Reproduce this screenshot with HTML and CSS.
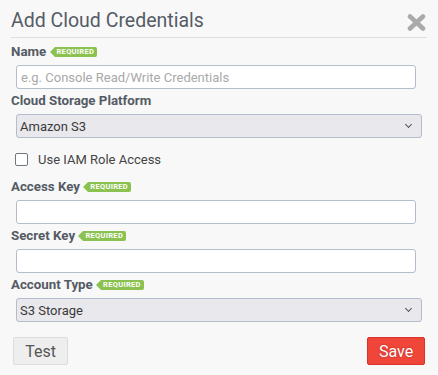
FILE: index.html
```html
<!DOCTYPE html>
<html lang="en">
<head>
  <meta charset="UTF-8">
  <meta name="viewport" content="width=device-width, initial-scale=1.0">
  <title>Add Cloud Credentials</title>
  <link rel="stylesheet" href="styles.css">
</head>
<body>
  <div class="modal">
    <div class="modal-header">
      <div class="modal-title">Add Cloud Credentials</div>
      <svg class="close" width="19" height="17" viewBox="0 0 19 17">
        <path d="M3 2.5 L16 14.5 M16 2.5 L3 14.5" stroke="#aaaaaa" stroke-width="4.6" stroke-linecap="round"/>
      </svg>
    </div>

    <div class="field-label">Name <span class="req">REQUIRED</span></div>
    <input class="text-input" type="text" placeholder="e.g. Console Read/Write Credentials">

    <div class="field-label">Cloud Storage Platform</div>
    <div class="select-wrap">
      <select class="select-input">
        <option>Amazon S3</option>
      </select>
    </div>

    <label class="check-row">
      <span class="checkbox"></span>
      Use IAM Role Access
    </label>

    <div class="field-label spaced">Access Key <span class="req">REQUIRED</span></div>
    <input class="text-input" type="text">

    <div class="field-label">Secret Key <span class="req">REQUIRED</span></div>
    <input class="text-input" type="text">

    <div class="field-label">Account Type <span class="req">REQUIRED</span></div>
    <div class="select-wrap">
      <select class="select-input">
        <option>S3 Storage</option>
      </select>
    </div>

    <div class="modal-footer">
      <button class="btn btn-test">Test</button>
      <button class="btn btn-save">Save</button>
    </div>
  </div>
</body>
</html>
```

FILE: styles.css
```css
body {
  margin: 0;
  font-family: 'Roboto', 'Liberation Sans', sans-serif;
  background: #f8f8f8;
  color: #555c66;
}
.modal {
  padding: 0 11px;
}
.modal-header {
  display: flex;
  justify-content: space-between;
  align-items: flex-start;
  padding: 9px 0 4px;
  border-bottom: 1px solid #dddddd;
}
.modal-title {
  font-size: 19.5px;
  line-height: 24px;
  color: #555c66;
}
.close {
  margin-top: 5px;
  margin-right: 1px;
}
.field-label {
  font-size: 13.3px;
  line-height: 16px;
  font-weight: bold;
  color: #545b65;
  margin: 4px 0 5px;
}
.modal-header + .field-label {
  margin-top: 6px;
}
.field-label.spaced {
  margin-top: 12px;
}
.req {
  position: relative;
  display: inline-block;
  vertical-align: 2px;
  height: 10px;
  line-height: 10px;
  padding: 0 3px 0 2px;
  margin-left: 5px;
  background: #8bc14e;
  color: #fff;
  font-size: 7.5px;
  font-weight: bold;
  letter-spacing: 0.3px;
  border-radius: 0 2px 2px 0;
}
.req::before {
  content: "";
  position: absolute;
  left: -5px;
  top: 0;
  border-style: solid;
  border-width: 5px 5px 5px 0;
  border-color: transparent #8bc14e transparent transparent;
}
.text-input {
  display: block;
  box-sizing: border-box;
  width: 400px;
  height: 24px;
  margin: 0 0 0 5px;
  padding: 0 4px;
  border: 1px solid #b4bdcb;
  border-radius: 3px;
  background: #fff;
  font-family: inherit;
  font-size: 13px;
  color: #333;
  outline: none;
}
.text-input::placeholder {
  color: #a9a9a9;
}
.select-wrap {
  position: relative;
  margin: 0 5px;
}
.select-wrap::after {
  content: "";
  position: absolute;
  right: 11px;
  top: 8px;
  width: 4px;
  height: 4px;
  border-right: 1.5px solid #555;
  border-bottom: 1.5px solid #555;
  transform: rotate(45deg);
  pointer-events: none;
}
.select-input {
  display: block;
  box-sizing: border-box;
  width: 100%;
  height: 24px;
  padding: 0 3px;
  border: 1px solid #b4bdcb;
  border-radius: 3px;
  background: #e8e8ed;
  font-family: inherit;
  font-size: 13px;
  color: #3a3a3a;
  -webkit-appearance: none;
  appearance: none;
  outline: none;
}
.check-row {
  display: flex;
  align-items: center;
  margin-top: 13px;
  height: 16px;
  font-size: 13px;
  color: #444;
}
.checkbox {
  box-sizing: border-box;
  width: 13px;
  height: 13px;
  margin: 0 10px 0 4px;
  border: 1.5px solid #6f7680;
  border-radius: 2px;
  background: #fff;
}
.modal-footer {
  display: flex;
  justify-content: space-between;
  margin-top: 15px;
  padding: 0 2px;
}
.btn {
  box-sizing: border-box;
  height: 28px;
  font-family: inherit;
  font-size: 16px;
  border-radius: 2px;
  cursor: pointer;
}
.btn-test {
  width: 55px;
  background: #eeeeee;
  border: 1px solid #dcdcdc;
  color: #555;
}
.btn-save {
  width: 58px;
  background: #f0463a;
  border: 1px solid #d8322a;
  color: #fff;
  text-shadow: 0 0 2px rgba(120, 0, 0, 0.5);
}
```
